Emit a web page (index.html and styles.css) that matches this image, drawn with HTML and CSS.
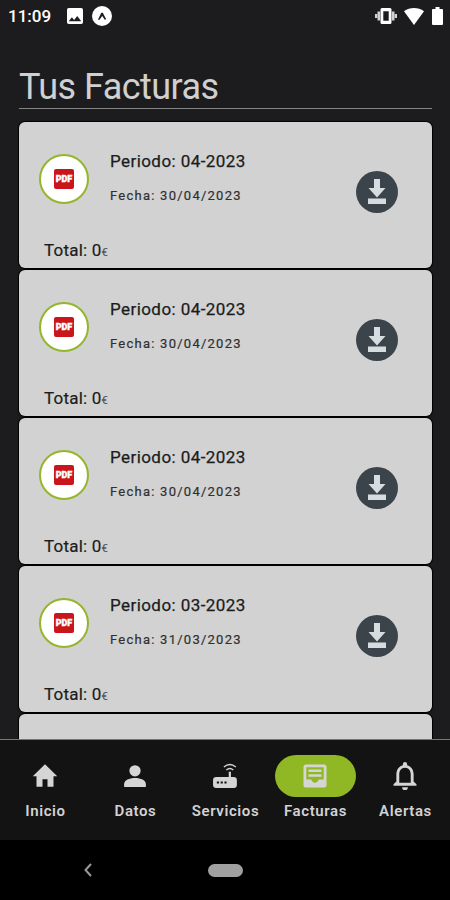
FILE: index.html
```html
<!DOCTYPE html>
<html lang="es">
<head>
<meta charset="utf-8">
<title>Tus Facturas</title>
<link rel="stylesheet" href="styles.css">
</head>
<body>
<div class="phone">
  <div class="status">
    <span class="clock">11:09</span>
    <svg class="s-image" viewBox="3 3 18 18"><path d="M21 19V5a2 2 0 0 0-2-2H5a2 2 0 0 0-2 2v14a2 2 0 0 0 2 2h14a2 2 0 0 0 2-2zM8.500 13.500l2.500 3.010L14.500 12l4.500 6H5z"/></svg>
    <svg class="s-app" viewBox="0 0 20 20"><circle cx="10" cy="10" r="10"/><path d="M6 13.500 9.300 6.800h1.500l3.400 6.500-1.400.5-2.600-3.900-2.900 4z" fill="#1c1c1e"/></svg>
    <span class="spacer"></span>
    <svg class="s-vibrate" viewBox="0 0 22 18"><path fill-rule="evenodd" d="M7 1h8a1.500 1.500 0 0 1 1.500 1.500v13A1.500 1.500 0 0 1 15 17H7a1.500 1.500 0 0 1-1.500-1.500v-13A1.500 1.500 0 0 1 7 1zm1.300 3.200v9.600h5.400V4.200z"/><path opacity=".8" d="M2.500 4.500h2.600v9H2.500zM0 7h2.200v4H0zM16.900 4.500h2.600v9h-2.600zM19.800 7H22v4h-2.200z"/></svg>
    <svg class="s-wifi" viewBox="0 0 20 17"><path d="M0 3.200C6-1 14-1 20 3.200L10 17z"/></svg>
    <svg class="s-battery" viewBox="0 0 11 18"><path d="M3.500 0h4v2H10a1 1 0 0 1 1 1v14a1 1 0 0 1-1 1H1a1 1 0 0 1-1-1V3a1 1 0 0 1 1-1h2.500z"/></svg>
  </div>
  <main class="content">
    <h1 class="title">Tus Facturas</h1>
    <div class="cards">
      <article class="card">
        <div class="badge"><span class="pdf">PDF</span></div>
        <div class="info"><div class="period">Periodo: 04-2023</div><div class="date">Fecha: 30/04/2023</div></div>
        <div class="download"><svg viewBox="0 0 18 26"><path d="M6 0h6v9h5.500L9 18.500.5 9H6zM0 19.500h18V25H0z"/></svg></div>
        <div class="total">Total: 0<span class="euro">€</span></div>
      </article>
      <article class="card">
        <div class="badge"><span class="pdf">PDF</span></div>
        <div class="info"><div class="period">Periodo: 04-2023</div><div class="date">Fecha: 30/04/2023</div></div>
        <div class="download"><svg viewBox="0 0 18 26"><path d="M6 0h6v9h5.500L9 18.500.5 9H6zM0 19.500h18V25H0z"/></svg></div>
        <div class="total">Total: 0<span class="euro">€</span></div>
      </article>
      <article class="card">
        <div class="badge"><span class="pdf">PDF</span></div>
        <div class="info"><div class="period">Periodo: 04-2023</div><div class="date">Fecha: 30/04/2023</div></div>
        <div class="download"><svg viewBox="0 0 18 26"><path d="M6 0h6v9h5.500L9 18.500.5 9H6zM0 19.500h18V25H0z"/></svg></div>
        <div class="total">Total: 0<span class="euro">€</span></div>
      </article>
      <article class="card">
        <div class="badge"><span class="pdf">PDF</span></div>
        <div class="info"><div class="period">Periodo: 03-2023</div><div class="date">Fecha: 31/03/2023</div></div>
        <div class="download"><svg viewBox="0 0 18 26"><path d="M6 0h6v9h5.500L9 18.500.5 9H6zM0 19.500h18V25H0z"/></svg></div>
        <div class="total">Total: 0<span class="euro">€</span></div>
      </article>
      <article class="card"></article>
    </div>
  </main>
  <nav class="tabs">
    <div class="tab"><span class="pill"><svg viewBox="0 0 24 24"><path d="M10 20.500v-6h4v6h4.800v-8.300h3L12 2.500 2.200 12.200h3v8.300z"/></svg></span><span class="label">Inicio</span></div>
    <div class="tab"><span class="pill"><svg viewBox="0 0 24 24"><circle cx="12" cy="7.800" r="4.500"/><path d="M3.300 20.800v-2.300c0-3.300 4-5 8.700-5s8.700 1.700 8.700 5v2.300z"/></svg></span><span class="label">Datos</span></div>
    <div class="tab"><span class="pill"><svg class="router" viewBox="0 0 24 24"><path fill-rule="evenodd" d="M15 13V8h2v5h2.500a3 3 0 0 1 3 3v4a3 3 0 0 1-3 3h-16a3 3 0 0 1-3-3v-4a3 3 0 0 1 3-3zM4 17v2h2v-2zm3.500 0v2h2v-2zm3.500 0v2h2v-2z"/><path d="M10.500 3.700q5.500-4.600 11 0M12.800 6.400q3.200-2.600 6.400 0" fill="none" stroke="#d5d5d5" stroke-width="1.300"/></svg></span><span class="label">Servicios</span></div>
    <div class="tab active"><span class="pill"><svg viewBox="0 0 24 24"><path fill-rule="evenodd" d="M3 .5h18A2.500 2.500 0 0 1 23.500 3v18a2.500 2.500 0 0 1-2.500 2.500H3A2.500 2.500 0 0 1 .5 21V3A2.500 2.500 0 0 1 3 .5zM3.300 3.300v12.300h4.900c.6 2 2 3.200 3.800 3.200s3.200-1.200 3.800-3.200h4.900V3.300zM5.500 5.500h13V8h-13zm0 4.700h13v2.600h-13z"/></svg></span><span class="label">Facturas</span></div>
    <div class="tab"><span class="pill"><svg class="bell" viewBox="4 2.500 16 19.500"><path d="M12 22a2 2 0 0 0 2-2h-4a2 2 0 0 0 2 2zm6-6v-5c0-3.070-1.630-5.640-4.500-6.320V4a1.500 1.500 0 0 0-3 0v.68C7.640 5.360 6 7.920 6 11v5l-2 2v1h16v-1zm-2 1H8v-6c0-2.480 1.510-4.500 4-4.500s4 2.020 4 4.500z"/></svg></span><span class="label">Alertas</span></div>
  </nav>
  <div class="system">
    <svg class="back" viewBox="0 0 8 14"><path d="M7 1 1.500 7 7 13"/></svg>
    <span class="home"></span>
    <span></span>
  </div>
</div>
</body>
</html>
```
FILE: styles.css
```css
* { box-sizing: border-box; }
body { margin: 0; background: #000; font-family: Roboto, sans-serif; }
svg { display: block; }
.phone { width: 450px; height: 900px; display: flex; flex-direction: column; overflow: hidden; background: #1c1c1e; }
.status { height: 32px; flex: none; display: flex; align-items: center; padding: 0 7px 0 8px; fill: #fff; }
.clock { color: #fff; font-size: 17px; font-weight: 500; line-height: 32px; width: 59px; white-space: nowrap; }
.s-image { width: 16px; height: 16px; margin-right: 9px; }
.s-app { width: 20px; height: 20px; }
.spacer { flex: 1; }
.s-vibrate { width: 22px; height: 18px; margin-right: 7px; }
.s-wifi { width: 20px; height: 17px; margin-right: 8px; }
.s-battery { width: 11px; height: 18px; }
.content { flex: 1; min-height: 0; overflow: hidden; padding: 32px 18px 0 19px; }
.title { margin: 0 0 13px; height: 45px; padding-top: 1px; line-height: 45px; border-bottom: 1px solid #858585; color: #d0d0d0; font-size: 36px; font-weight: 400; letter-spacing: -.55px; }
.cards { display: flex; flex-direction: column; gap: 2px; background: linear-gradient(#000, #000) center / calc(100% - 12px) 100% no-repeat; border-radius: 6px; }
.card { height: 146px; flex: none; background: #d2d2d2; border-radius: 6px; box-shadow: 0 0 1px 1px #000; color: #1c1c1c; display: grid; grid-template-columns: 71px 1fr 42px; grid-template-rows: 83px auto; padding: 31px 34px 0 20px; }
.badge { width: 50px; height: 50px; margin-top: 1px; border: 2px solid #94b52c; border-radius: 50%; background: #fff; display: grid; place-items: center; }
.pdf { width: 20px; height: 20px; border-radius: 2px; background: #c9151b; color: #fff; font-size: 9px; font-weight: 900; line-height: 20px; text-align: center; -webkit-text-stroke: .4px #fff; }
.period { font-size: 17px; line-height: 20px; margin-top: -2px; letter-spacing: .43px; white-space: nowrap; -webkit-text-stroke: .25px; }
.date { font-size: 13px; line-height: 16px; margin-top: 17px; letter-spacing: 1.25px; color: #303030; white-space: nowrap; -webkit-text-stroke: .2px; }
.download { width: 42px; height: 42px; margin-top: 18px; border-radius: 50%; background: #3b444a; display: grid; place-items: center; fill: #d5dde0; }
.download svg { width: 18px; height: 26px; }
.total { grid-column: 1 / -1; padding-left: 5px; font-size: 17px; line-height: 20px; margin-top: 4px; letter-spacing: .2px; -webkit-text-stroke: .2px; }
.euro { font-size: 11px; color: #555; }
.tabs { height: 101px; flex: none; background: #131313; border-top: 1px solid #777; display: grid; grid-template-columns: repeat(5, 1fr); padding-top: 15px; }
.tab { display: flex; flex-direction: column; align-items: center; fill: #d5d5d5; color: #d2d2d2; }
.pill { width: 81px; height: 42px; display: grid; place-items: center; border-radius: 21px; }
.pill svg { width: 30px; height: 30px; }
.pill .router { width: 27px; height: 26px; }
.pill .bell { width: 24px; height: 28px; }
.active .pill { background: #90b825; }
.active .pill svg { width: 24px; height: 24px; }
.label { margin-top: 4px; padding-left: 1px; font-size: 15px; line-height: 20px; font-weight: 600; letter-spacing: .6px; }
.system { height: 60px; flex: none; background: #000; display: grid; grid-template-columns: 175px 100px 175px; place-items: center; }
.back { width: 8px; height: 14px; fill: none; stroke: #999; stroke-width: 2; }
.home { width: 35px; height: 13px; border-radius: 7px; background: #a0a0a0; }
```
